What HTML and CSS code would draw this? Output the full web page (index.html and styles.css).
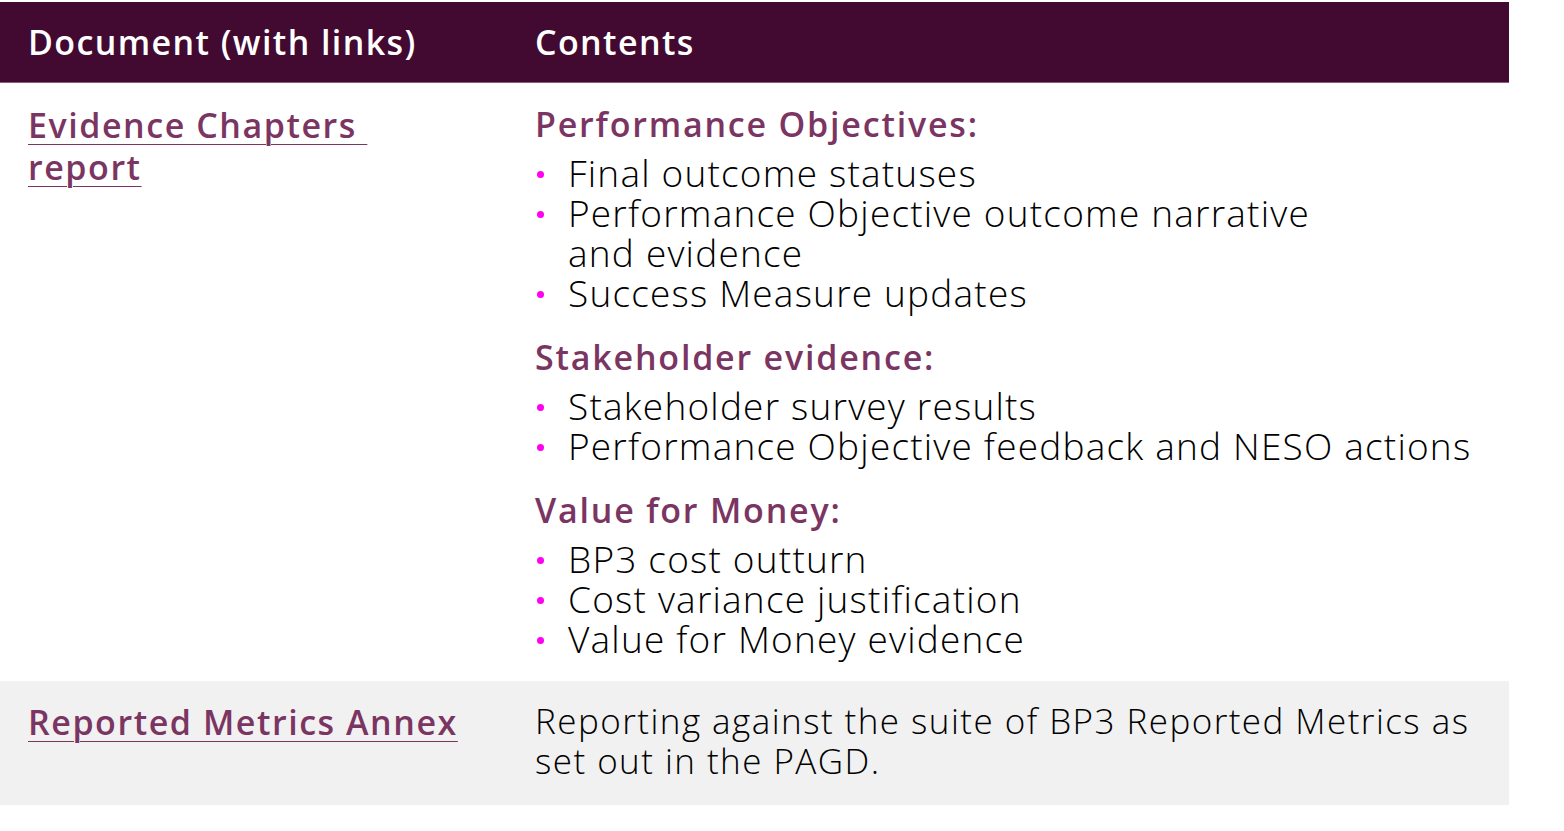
FILE: index.html
```html
<!DOCTYPE html>
<html lang="en">
<head>
<meta charset="utf-8">
<title>Documents</title>
<link rel="stylesheet" href="styles.css">
</head>
<body>
<div class="table">
  <div class="row head">
    <div class="cell c1">Document (with links)</div>
    <div class="cell c2">Contents</div>
  </div>
  <div class="row body-row">
    <div class="cell c1"><a class="doc-link" href="#">Evidence Chapters&nbsp;<br>report</a></div>
    <div class="cell c2">
      <h3 class="group-title">Performance Objectives:</h3>
      <ul class="bullets">
        <li>Final outcome statuses</li>
        <li>Performance Objective outcome narrative<br>and evidence</li>
        <li>Success Measure updates</li>
      </ul>
      <h3 class="group-title">Stakeholder evidence:</h3>
      <ul class="bullets">
        <li>Stakeholder survey results</li>
        <li>Performance Objective feedback and NESO actions</li>
      </ul>
      <h3 class="group-title">Value for Money:</h3>
      <ul class="bullets">
        <li>BP3 cost outturn</li>
        <li>Cost variance justification</li>
        <li>Value for Money evidence</li>
      </ul>
    </div>
  </div>
  <div class="row body-row alt">
    <div class="cell c1"><a class="doc-link" href="#">Reported Metrics Annex</a></div>
    <div class="cell c2"><p class="plain">Reporting against the suite of BP3 Reported Metrics as<br>set out in the PAGD.</p></div>
  </div>
</div>
</body>
</html>
```
FILE: styles.css
```css
html, body {
  margin: 0;
  padding: 0;
  background: #ffffff;
}
body {
  font-family: "Open Sans", "Liberation Sans", sans-serif;
  color: #000000;
  padding-top: 2px;
}
.table {
  width: 1509px;
  display: flex;
  flex-direction: column;
}
.row {
  display: grid;
  grid-template-columns: 535px 1fr;
}
.head {
  background: #420a31;
  height: 80px;
  border-bottom: 1px solid #8c5a7c;
  align-items: center;
  color: #ffffff;
  font-weight: 600;
  font-size: 34px;
  letter-spacing: 1.4px;
  line-height: 40px;
}
.head .c1 {
  padding-left: 28px;
}
.body-row {
  padding: 21px 0 22px;
}
.body-row .c1 {
  padding-left: 28px;
}
.alt {
  background: #f1f1f1;
  padding: 20px 0 24px;
}
.doc-link {
  color: #7b3562;
  font-weight: 600;
  font-size: 34px;
  letter-spacing: 1.55px;
  line-height: 42px;
  text-decoration: underline;
  text-decoration-thickness: 1px;
  text-underline-offset: 6px;
}
.group-title {
  margin: 0 0 9px;
  color: #7b3562;
  font-weight: 600;
  font-size: 34px;
  letter-spacing: 1.8px;
  line-height: 40px;
}
.bullets {
  list-style: none;
  margin: 0 0 24px;
  padding: 0;
}
.bullets:last-child {
  margin-bottom: 0;
}
.bullets li {
  position: relative;
  padding-left: 33px;
  font-weight: 300;
  font-size: 37px;
  letter-spacing: 1.2px;
  line-height: 40px;
}
.bullets li::before {
  content: "";
  position: absolute;
  left: 2px;
  top: 18px;
  width: 7px;
  height: 7px;
  border-radius: 50%;
  background: #ff00f0;
}
.plain {
  margin: 0;
  font-weight: 300;
  font-size: 35px;
  letter-spacing: 1.45px;
  line-height: 40px;
}
```
